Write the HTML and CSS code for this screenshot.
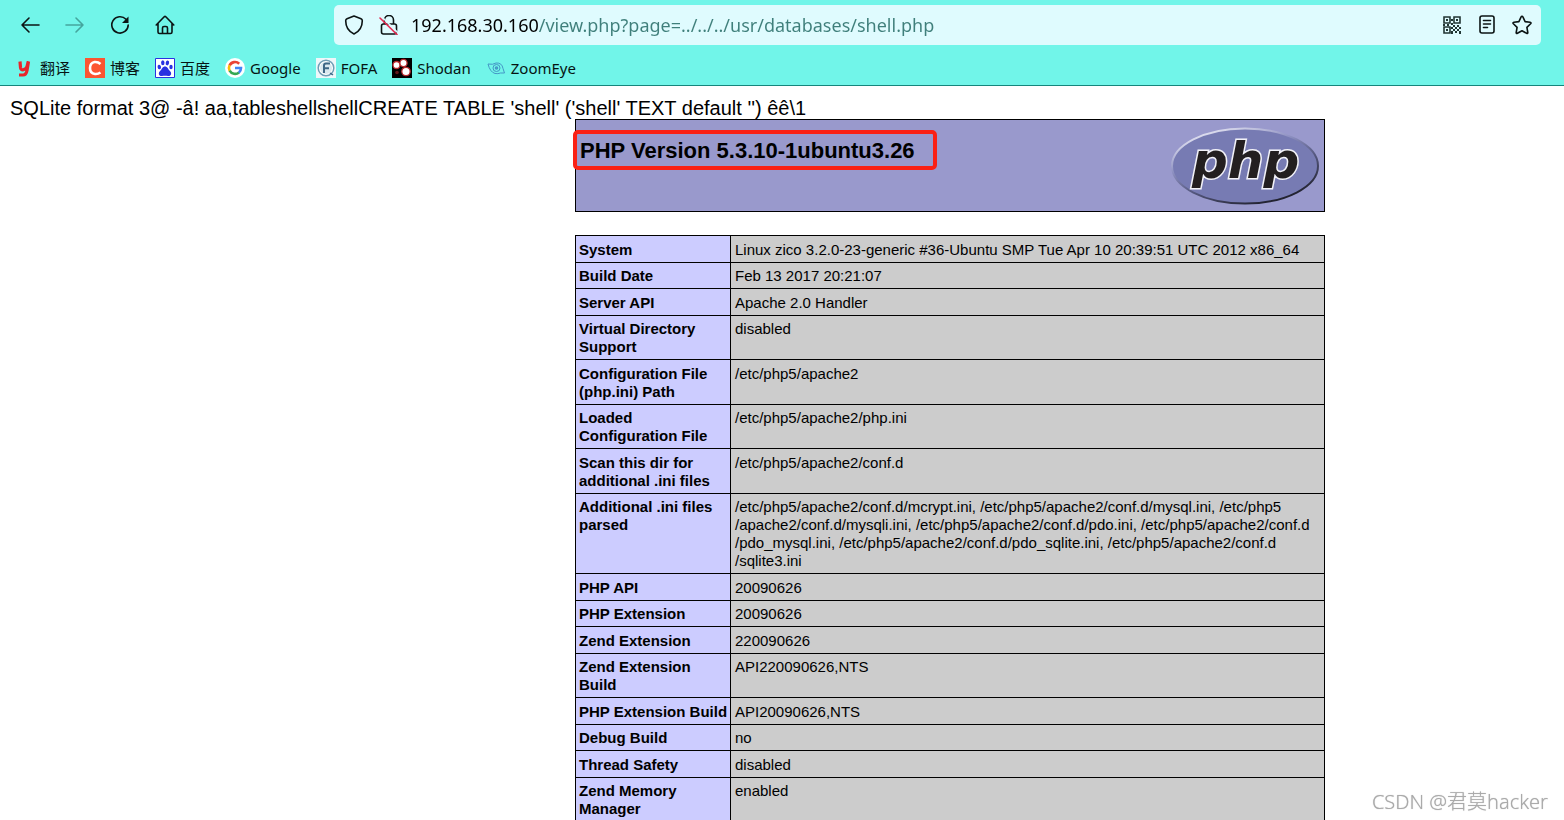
FILE: index.html
```html
<!DOCTYPE html>
<html lang="zh-CN">
<head>
<meta charset="utf-8">
<title>phpinfo()</title>
<link rel="stylesheet" href="styles.css">
</head>
<body>
<header class="browser">
  <div class="toolbar">
    <nav class="nav" aria-label="Navigation">
      <button class="nav-btn" aria-label="Back"><svg class="icon" viewBox="0 0 20 20"><path d="M19 10H2M9 3L2 10l7 7"/></svg></button>
      <button class="nav-btn" aria-label="Forward" disabled><svg class="icon" viewBox="0 0 20 20"><path d="M1 10h17M11 3l7 7-7 7"/></svg></button>
      <button class="nav-btn" aria-label="Reload"><svg class="icon" viewBox="0 0 20 20"><path d="M16 4.300A8.200 8.200 0 1 0 18.200 10"/><path class="solid" d="M18.500 1.500v6.500h-6.500z"/></svg></button>
      <button class="nav-btn" aria-label="Home"><svg class="icon" viewBox="0 0 20 20"><path d="M1.200 10L9.200 1.800q.8-.7 1.600 0L18.800 10M3 8.500V17q0 1.500 1.500 1.500h11q1.500 0 1.500-1.500V8.500M7.500 18v-5q0-1.500 1.500-1.500h2q1.500 0 1.500 1.500v5"/></svg></button>
    </nav>
    <div class="address">
      <button class="bar-btn" aria-label="Tracking protection"><svg class="icon" viewBox="0 0 20 20"><path d="M10 1l7 2.800q1.300.5 1.300 2C18.300 12 15.500 16.500 10 19 4.500 16.500 1.700 12 1.700 5.800q0-1.500 1.300-2z"/></svg></button>
      <button class="bar-btn" aria-label="Connection not secure"><svg class="icon" viewBox="0 0 20 20"><path d="M5.500 9V5a4.500 4.500 0 0 1 9 0v4M4.500 9h11q2 0 2 2v6q0 2-2 2h-11q-2 0-2-2v-6q0-2 2-2"/><path class="slash-gap" d="M3 2l17 17"/><path class="slash" d="M1 3l17 16.500"/></svg></button>
      <input class="url" type="text" aria-label="Address" value="192.168.30.160/view.php?page=../../../usr/databases/shell.php">
      <button class="bar-btn" aria-label="QR code"><svg class="icon qr" viewBox="0 0 18 18"><path d="M1 1h6v6H1zM11 1h6v6h-6zM1 11h6v6H1z"/><path class="solid" d="M3 3h2v2H3zM13 3h2v2h-2zM3 13h2v2H3zM8 3h2v2H8zM8 7h2v2H8zM10 9h2v2h-2zM14 9h2v2h-2zM8 11h2v2H8zM12 11h2v2h-2zM16 11h2v2h-2zM10 13h2v2h-2zM14 13h2v2h-2zM8 15h2v3H8zM12 15h2v2h-2zM16 15h2v3h-2zM4 8h2v2H4zM0 8h2v2H0z"/></svg></button>
      <button class="bar-btn" aria-label="Reader view"><svg class="icon" viewBox="0 0 20 20"><rect x="3" y="1" width="14" height="17" rx="2"/><path d="M6.500 5.500h7M6.500 9h7M6.500 12.500h4"/></svg></button>
      <button class="bar-btn" aria-label="Bookmark this page"><svg class="icon" viewBox="0 0 20 20"><path d="M10 1.200q.6 0 .9.700l2.200 4.700 5 .7q1.500.3.500 1.400l-3.700 3.700.9 5.100q.1 1.400-1.200.8L10 15.800l-4.600 2.500q-1.300.6-1.200-.8l.9-5.100L1.400 8.700q-1-1.100.5-1.400l5-.7 2.200-4.700q.3-.7.9-.7z"/></svg></button>
    </div>
  </div>
  <nav class="bookmarks" aria-label="Bookmarks">
    <a class="bookmark" href="#"><svg class="fav" viewBox="0 0 20 20"><path d="M5 3.500l.5 6q.3 2.800 3 2.200 2.300-.4 3.500-3l1.200-5.200M13.500 3.500l-1.500 9q-.8 4.500-4 4.500H4" fill="none" stroke="#e8242b" stroke-width="3.200"/></svg>翻译</a>
    <a class="bookmark" href="#"><svg class="fav" viewBox="0 0 20 20"><path fill="#fc5531" d="M0 0h20v20H0z"/><path d="M15.500 6Q13 3.600 9.500 4 5 5 5 10q0 5.500 5 6 3 .3 5.500-1.500" fill="none" stroke="#fff" stroke-width="2.600"/></svg>博客</a>
    <a class="bookmark" href="#"><svg class="fav" viewBox="0 0 20 20"><path fill="#fff" stroke="#2932e1" d="M.5.500h19v19H.5z"/><g fill="#2932e1"><ellipse cx="4.300" cy="9" rx="1.700" ry="2.300" transform="rotate(-15 4.300 9)"/><ellipse cx="7.800" cy="4.800" rx="1.700" ry="2.500"/><ellipse cx="12.400" cy="4.900" rx="1.700" ry="2.500" transform="rotate(12 12.400 4.900)"/><ellipse cx="16" cy="9" rx="1.700" ry="2.300"/><path d="M10 8.500c2.500 0 3 2.500 4.500 4 3 2.500 1.500 6-1.500 5.500-2-.5-4-.5-6 0-3 .5-4.500-3-1.500-5.500 1.500-1.500 2-4 4.500-4"/></g></svg>百度</a>
    <a class="bookmark" href="#"><svg class="fav" viewBox="0 0 20 20"><circle cx="10" cy="10" r="10" fill="#fff"/><g fill="none" stroke-width="2.600"><path stroke="#ea4335" d="M4.600 7.500A6 6 0 0 1 14.200 5.700"/><path stroke="#fbbc05" d="M4.700 12.800A6 6 0 0 1 4.600 7.200"/><path stroke="#34a853" d="M14 14.400A6 6 0 0 1 4.700 12.600"/><path stroke="#4285f4" d="M10 10h6Q16 13 13.800 14.600"/></g></svg>Google</a>
    <a class="bookmark" href="#"><svg class="fav" viewBox="0 0 20 20"><path fill="#eef7fa" d="M0 0h20v20H0z"/><circle cx="10" cy="10" r="7.800" fill="#fff" stroke="#6f9db5" stroke-width="1.500"/><circle cx="10" cy="10" r="6" fill="#d9e8ef"/><path d="M8 15V7.500q0-2 2-2h4M8 10.200h5" fill="none" stroke="#3d6685" stroke-width="2"/><path d="M14 15l3 2" stroke="#3d6685" stroke-width="1.500"/></svg>FOFA</a>
    <a class="bookmark" href="#"><svg class="fav" viewBox="0 0 20 20"><path d="M0 0h20v20H0z"/><g fill="#fff" stroke="#b9292c" stroke-width="1.300"><circle cx="4.500" cy="7" r="3.500"/><circle cx="11.500" cy="5" r="3.600"/><circle cx="14" cy="13.500" r="4.200"/></g><circle cx="5" cy="14.500" r="1.800" fill="#611719"/></svg>Shodan</a>
    <a class="bookmark" href="#"><svg class="fav" viewBox="0 0 20 20"><g fill="none" stroke="#4497c6" stroke-width="1"><path d="M2 6q5 1 8-1 6-.5 7 5.500l1.500 4.500h-4Q12 16 9 15.500 4 14 2 6z"/><circle cx="10.500" cy="10" r="3.500"/><circle cx="10.500" cy="10" r="1" stroke-width="1.500"/></g></svg>ZoomEye</a>
  </nav>
</header>
<main class="page">
  <p class="dump">SQLite format 3@ -â! aa,tableshellshellCREATE TABLE 'shell' ('shell' TEXT default '') êê\1</p>
  <div class="info">
    <section class="banner">
      <h1 class="version">PHP Version 5.3.10-1ubuntu3.26</h1>
      <svg class="php-logo" viewBox="0 0 150 83" role="img" aria-label="PHP logo">
        <defs>
          <linearGradient id="rim" x1="0.200" y1="0" x2="0.800" y2="1">
            <stop offset="0" stop-color="#ececf7"/><stop offset="0.350" stop-color="#8c8fc0"/><stop offset="0.600" stop-color="#55587f"/><stop offset="1" stop-color="#17171f"/>
          </linearGradient>
        </defs>
        <ellipse cx="75" cy="42" rx="73" ry="37.500" fill="#777bb3" stroke="url(#rim)" stroke-width="2"/>
        <text class="php-word" x="22" y="54">php</text>
      </svg>
    </section>
    <table class="facts">
      <tbody>
      <tr><th scope="row">System</th><td>Linux zico 3.2.0-23-generic #36-Ubuntu SMP Tue Apr 10 20:39:51 UTC 2012 x86_64</td></tr>
      <tr><th scope="row">Build Date</th><td>Feb 13 2017 20:21:07</td></tr>
      <tr><th scope="row">Server API</th><td>Apache 2.0 Handler</td></tr>
      <tr><th scope="row">Virtual Directory Support</th><td>disabled</td></tr>
      <tr><th scope="row">Configuration File (php.ini) Path</th><td>/etc/php5/apache2</td></tr>
      <tr><th scope="row">Loaded Configuration File</th><td>/etc/php5/apache2/php.ini</td></tr>
      <tr><th scope="row">Scan this dir for additional .ini files</th><td>/etc/php5/apache2/conf.d</td></tr>
      <tr><th scope="row">Additional .ini files parsed</th><td>/etc/php5/apache2/conf.d/mcrypt.ini, /etc/php5/apache2/conf.d/mysql.ini, /etc/php5<br>/apache2/conf.d/mysqli.ini, /etc/php5/apache2/conf.d/pdo.ini, /etc/php5/apache2/conf.d<br>/pdo_mysql.ini, /etc/php5/apache2/conf.d/pdo_sqlite.ini, /etc/php5/apache2/conf.d<br>/sqlite3.ini</td></tr>
      <tr><th scope="row">PHP API</th><td>20090626</td></tr>
      <tr><th scope="row">PHP Extension</th><td>20090626</td></tr>
      <tr><th scope="row">Zend Extension</th><td>220090626</td></tr>
      <tr><th scope="row">Zend Extension<br>Build</th><td>API220090626,NTS</td></tr>
      <tr><th scope="row">PHP Extension Build</th><td>API20090626,NTS</td></tr>
      <tr><th scope="row">Debug Build</th><td>no</td></tr>
      <tr><th scope="row">Thread Safety</th><td>disabled</td></tr>
      <tr><th scope="row">Zend Memory Manager</th><td>enabled</td></tr>
      </tbody>
    </table>
  </div>
</main>
<div class="watermark">CSDN @君莫hacker</div>
</body>
</html>
```
FILE: styles.css
```css
*, *::after { box-sizing: border-box; }
body {
  margin: 0;
  background: #fff;
  color: #000;
  font-family: "Liberation Sans", Arial, sans-serif;
  height: 100vh;
  overflow: hidden;
}

/* Browser chrome */
.browser {
  background: #71f5e9;
  border-bottom: 1px solid #16857c;
  font-family: "Noto Sans", "Noto Sans CJK SC", sans-serif;
}
.toolbar {
  display: flex;
  align-items: center;
  height: 50px;
  padding: 0 23px 0 7px;
}
.nav { display: flex; flex: 0 0 327px; }
.nav-btn, .bar-btn {
  display: flex;
  align-items: center;
  justify-content: center;
  padding: 0;
  border: 0;
  background: none;
  color: #0c1414;
}
.nav-btn { width: 45px; height: 40px; }
.nav-btn:disabled { color: #45a59d; }
.bar-btn { flex: none; width: 35px; height: 40px; }
.icon {
  width: 20px;
  height: 20px;
  fill: none;
  stroke: currentColor;
  stroke-width: 1.6;
  stroke-linecap: round;
  stroke-linejoin: round;
}
.qr { width: 18px; height: 18px; color: #223634; stroke-linejoin: miter; }
.solid { fill: currentColor; stroke: none; }
.slash { stroke: #e22850; }
.slash-gap { stroke: #dffbfe; }
.address {
  display: flex;
  align-items: center;
  flex: 1;
  min-width: 0;
  height: 40px;
  padding: 0 2px;
  border-radius: 5px;
  background: #dffbfe;
}
.url {
  flex: 1;
  min-width: 0;
  height: 40px;
  margin-left: 5px;
  padding: 0;
  border: 0;
  outline: 0;
  font: 18px/24px "Noto Sans", sans-serif;
  color: #000;
  background: linear-gradient(to right, #000 127px, #3f7f7b 127px);
  -webkit-background-clip: text;
  background-clip: text;
  -webkit-text-fill-color: transparent;
}
.bookmarks {
  display: flex;
  align-items: center;
  gap: 15px;
  height: 35px;
  padding: 0 15px;
}
.bookmark {
  display: flex;
  align-items: center;
  gap: 5px;
  color: #061413;
  font-size: 15px;
  line-height: 20px;
  text-decoration: none;
  white-space: nowrap;
}
.fav { width: 20px; height: 20px; flex: none; }

/* Page */
.page { padding: 11px 0 0 10px; }
.dump { margin: 0; font-size: 20px; line-height: 22px; }
.info { width: 750px; max-width: 100%; margin: 0 239px 0 auto; }
.banner {
  position: relative;
  display: flex;
  align-items: flex-start;
  justify-content: space-between;
  margin-bottom: 23px;
  padding: 4px;
  border: 1px solid #000;
  background: #9999cc;
}
.version { margin: 14px 0 0; font-size: 22px; line-height: 26px; }
.version::after {
  content: "";
  position: absolute;
  top: 10px;
  left: -3px;
  width: 364px;
  height: 40px;
  border: 4px solid #fa2115;
  border-radius: 5px;
}
.php-logo { width: 150px; height: 83px; }
.php-word {
  font: italic bold 50px "DejaVu Sans", sans-serif;
  fill: #231f20;
  stroke: #f2f2f8;
  stroke-width: 3px;
  paint-order: stroke;
}
.facts {
  width: 100%;
  table-layout: fixed;
  border-collapse: collapse;
  font-size: 15px;
  line-height: 18px;
}
.facts th, .facts td {
  padding: 5px 4px 3px;
  border: 1px solid #000;
  text-align: left;
  vertical-align: top;
}
.facts tr:nth-child(even) > * { padding-top: 4px; }
.facts th { width: 155px; padding-left: 3px; padding-right: 0; background: #ccccff; }
.facts td { background: #cccccc; }

.watermark {
  position: fixed;
  right: 16px;
  bottom: 4px;
  color: #aaa;
  font: 300 20px/28px "Noto Sans", "Noto Sans CJK SC", sans-serif;
  text-shadow: 0 0 1px #bbb;
}
```
